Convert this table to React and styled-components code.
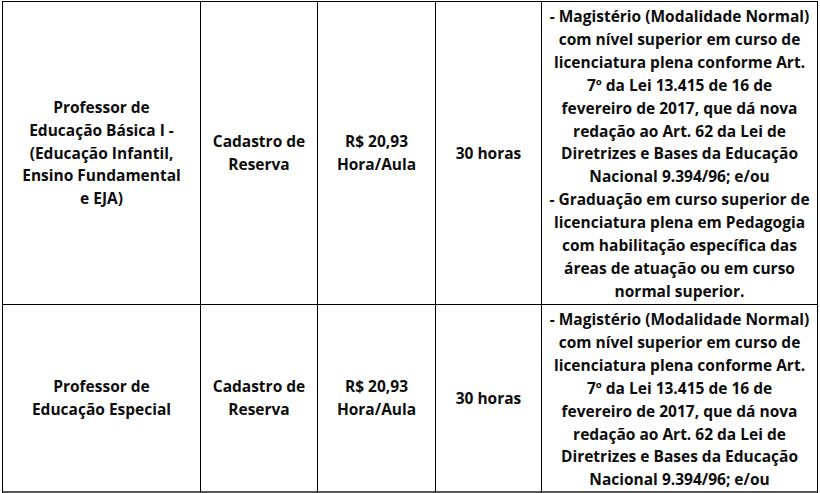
import React from "react";
import styled, { createGlobalStyle } from "styled-components";

const GlobalStyle = createGlobalStyle`
  html, body {
    margin: 0;
    padding: 0;
    background: #ffffff;
  }
  body {
    font-family: "Open Sans", Lato, "Liberation Sans", sans-serif;
    color: #0d0d0d;
  }
`;

const Page = styled.div`
  padding: 1px 0 0 2px;
  width: 820px;
  height: 493px;
  box-sizing: border-box;
  overflow: hidden;
`;

const Grid = styled.div`
  display: grid;
  grid-template-columns: 198px 117px 118px 106px 276px;
  border-top: 1px solid #000;
  border-left: 1px solid #000;
  width: max-content;
`;

const Cell = styled.div`
  box-sizing: border-box;
  height: ${(p) => p.h}px;
  border-right: 1px solid #000;
  border-bottom: ${(p) => (p.last ? "2px solid #555" : "1px solid #000")};
  display: flex;
  flex-direction: column;
  justify-content: ${(p) => (p.top ? "flex-start" : "center")};
  align-items: center;
  padding-top: ${(p) => (p.top ? 3 : 0)}px;
  font-size: 15.5px;
  font-weight: 700;
  line-height: 22.9px;
  text-align: center;
`;

const Line = styled.span`
  display: block;
  white-space: nowrap;
`;

const requisitos1 = [
  "- Magistério (Modalidade Normal)",
  "com nível superior em curso de",
  "licenciatura plena conforme Art.",
  "7º da Lei 13.415 de 16 de",
  "fevereiro de 2017, que dá nova",
  "redação ao Art. 62 da Lei de",
  "Diretrizes e Bases da Educação",
  "Nacional 9.394/96; e/ou",
  "- Graduação em curso superior de",
  "licenciatura plena em Pedagogia",
  "com habilitação específica das",
  "áreas de atuação ou em curso",
  "normal superior.",
];

const rows = [
  {
    h: 303,
    cargo: [
      "Professor de",
      "Educação Básica I -",
      "(Educação Infantil,",
      "Ensino Fundamental",
      "e EJA)",
    ],
    requisitos: requisitos1,
  },
  {
    h: 188,
    last: true,
    cargo: ["Professor de", "Educação Especial"],
    requisitos: requisitos1.slice(0, 8),
  },
];

function Lines({ items }) {
  return items.map((t, i) => <Line key={i}>{t}</Line>);
}

export default function App() {
  return (
    <Page>
      <GlobalStyle />
      <Grid>
        {rows.map((r, i) => (
          <React.Fragment key={i}>
            <Cell h={r.h} last={r.last}>
              <Lines items={r.cargo} />
            </Cell>
            <Cell h={r.h} last={r.last}>
              <Lines items={["Cadastro de", "Reserva"]} />
            </Cell>
            <Cell h={r.h} last={r.last}>
              <Lines items={["R$ 20,93", "Hora/Aula"]} />
            </Cell>
            <Cell h={r.h} last={r.last}>
              <Lines items={["30 horas"]} />
            </Cell>
            <Cell h={r.h} last={r.last} top>
              <Lines items={r.requisitos} />
            </Cell>
          </React.Fragment>
        ))}
      </Grid>
    </Page>
  );
}
